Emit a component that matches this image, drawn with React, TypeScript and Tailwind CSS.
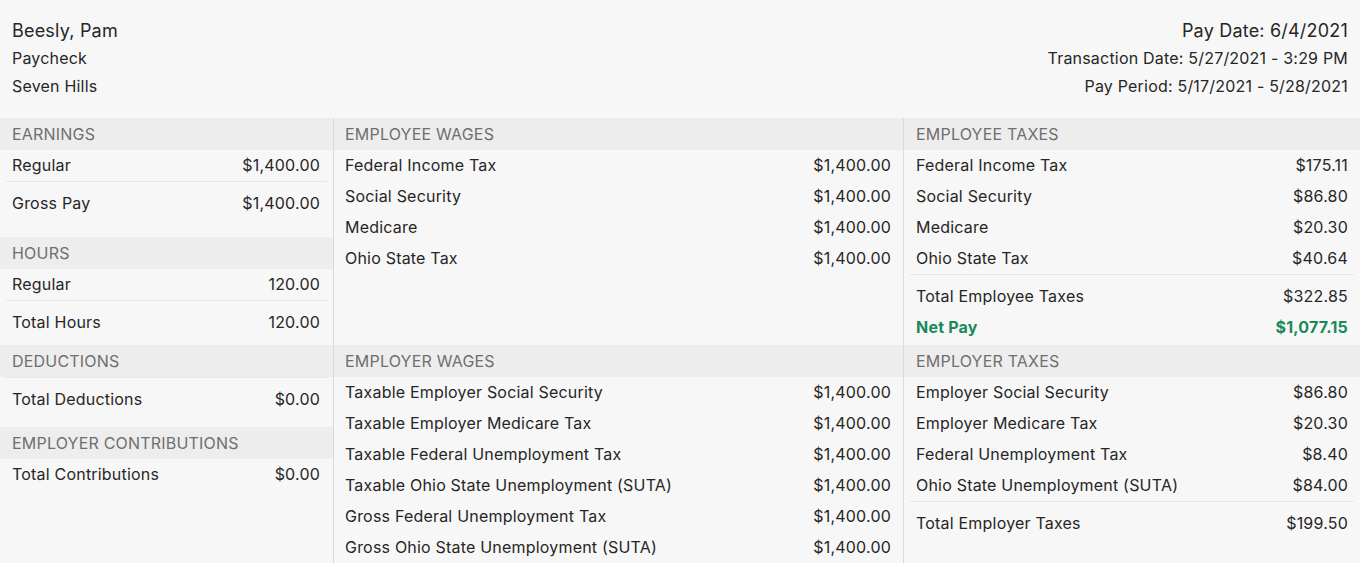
import React from "react";

type Row = { label: string; value: string };

const font = { fontFamily: "Inter, 'Noto Sans', sans-serif" };

function Header({ title }: { title: string }) {
  return (
    <div className="h-[32px] bg-[#ededed] px-3 flex items-center text-[16px] text-[#6f6f6f] uppercase pb-px">
      {title}
    </div>
  );
}

function Item({ row, bold }: { row: Row; bold?: boolean }) {
  return (
    <div
      className={
        "h-[31px] pl-3 pr-3 pb-[2px] flex items-center justify-between text-[16px] " +
        (bold ? "font-bold text-[#1b8a5a]" : "text-[#262626]")
      }
    >
      <span>{row.label}</span>
      <span>{row.value}</span>
    </div>
  );
}

function Sep() {
  return <div className="mx-[6px] h-px bg-[#e6e6e6] mb-[6px]" />;
}

export default function App() {
  return (
    <div
      className="w-[1360px] h-[563px] overflow-hidden bg-[#f7f7f7] text-[#262626] tracking-[0.2px]"
      style={font}
    >
      <div className="flex justify-between px-3 pt-[17px] pb-[18px]">
        <div className="flex flex-col">
          <div className="h-[27px] leading-[27px] text-[18px]">Beesly, Pam</div>
          <div className="h-[28px] leading-[28px] text-[16px]">Paycheck</div>
          <div className="h-[28px] leading-[28px] text-[16px]">Seven Hills</div>
        </div>
        <div className="flex flex-col items-end">
          <div className="h-[27px] leading-[27px] text-[18px]">Pay Date: 6/4/2021</div>
          <div className="h-[28px] leading-[28px] text-[16px]">Transaction Date: 5/27/2021 - 3:29 PM</div>
          <div className="h-[28px] leading-[28px] text-[16px]">Pay Period: 5/17/2021 - 5/28/2021</div>
        </div>
      </div>

      <div className="grid grid-cols-[334px_570px_456px] grid-rows-[227px_1fr] h-[445px]">
        {/* Col 1 row 1 */}
        <div className="border-r border-[#dadada] [&>div]:pr-[13px]">
          <Header title="Earnings" />
          <Item row={{ label: "Regular", value: "$1,400.00" }} />
          <Sep />
          <Item row={{ label: "Gross Pay", value: "$1,400.00" }} />
          <div className="h-[18px]" />
          <Header title="Hours" />
          <Item row={{ label: "Regular", value: "120.00" }} />
          <Sep />
          <Item row={{ label: "Total Hours", value: "120.00" }} />
        </div>
        {/* Col 2 row 1 */}
        <div className="border-r border-[#dadada] [&>div]:pl-[11px]">
          <Header title="Employee Wages" />
          <Item row={{ label: "Federal Income Tax", value: "$1,400.00" }} />
          <Item row={{ label: "Social Security", value: "$1,400.00" }} />
          <Item row={{ label: "Medicare", value: "$1,400.00" }} />
          <Item row={{ label: "Ohio State Tax", value: "$1,400.00" }} />
        </div>
        {/* Col 3 row 1 */}
        <div>
          <Header title="Employee Taxes" />
          <Item row={{ label: "Federal Income Tax", value: "$175.11" }} />
          <Item row={{ label: "Social Security", value: "$86.80" }} />
          <Item row={{ label: "Medicare", value: "$20.30" }} />
          <Item row={{ label: "Ohio State Tax", value: "$40.64" }} />
          <Sep />
          <Item row={{ label: "Total Employee Taxes", value: "$322.85" }} />
          <Item row={{ label: "Net Pay", value: "$1,077.15" }} bold />
        </div>

        {/* Col 1 row 2 */}
        <div className="border-r border-[#dadada] [&>div]:pr-[13px]">
          <Header title="Deductions" />
          <Sep />
          <Item row={{ label: "Total Deductions", value: "$0.00" }} />
          <div className="h-[12px]" />
          <Header title="Employer Contributions" />
          <Item row={{ label: "Total Contributions", value: "$0.00" }} />
        </div>
        {/* Col 2 row 2 */}
        <div className="border-r border-[#dadada] [&>div]:pl-[11px]">
          <Header title="Employer Wages" />
          <Item row={{ label: "Taxable Employer Social Security", value: "$1,400.00" }} />
          <Item row={{ label: "Taxable Employer Medicare Tax", value: "$1,400.00" }} />
          <Item row={{ label: "Taxable Federal Unemployment Tax", value: "$1,400.00" }} />
          <Item row={{ label: "Taxable Ohio State Unemployment (SUTA)", value: "$1,400.00" }} />
          <Item row={{ label: "Gross Federal Unemployment Tax", value: "$1,400.00" }} />
          <Item row={{ label: "Gross Ohio State Unemployment (SUTA)", value: "$1,400.00" }} />
        </div>
        {/* Col 3 row 2 */}
        <div>
          <Header title="Employer Taxes" />
          <Item row={{ label: "Employer Social Security", value: "$86.80" }} />
          <Item row={{ label: "Employer Medicare Tax", value: "$20.30" }} />
          <Item row={{ label: "Federal Unemployment Tax", value: "$8.40" }} />
          <Item row={{ label: "Ohio State Unemployment (SUTA)", value: "$84.00" }} />
          <Sep />
          <Item row={{ label: "Total Employer Taxes", value: "$199.50" }} />
        </div>
      </div>
    </div>
  );
}
